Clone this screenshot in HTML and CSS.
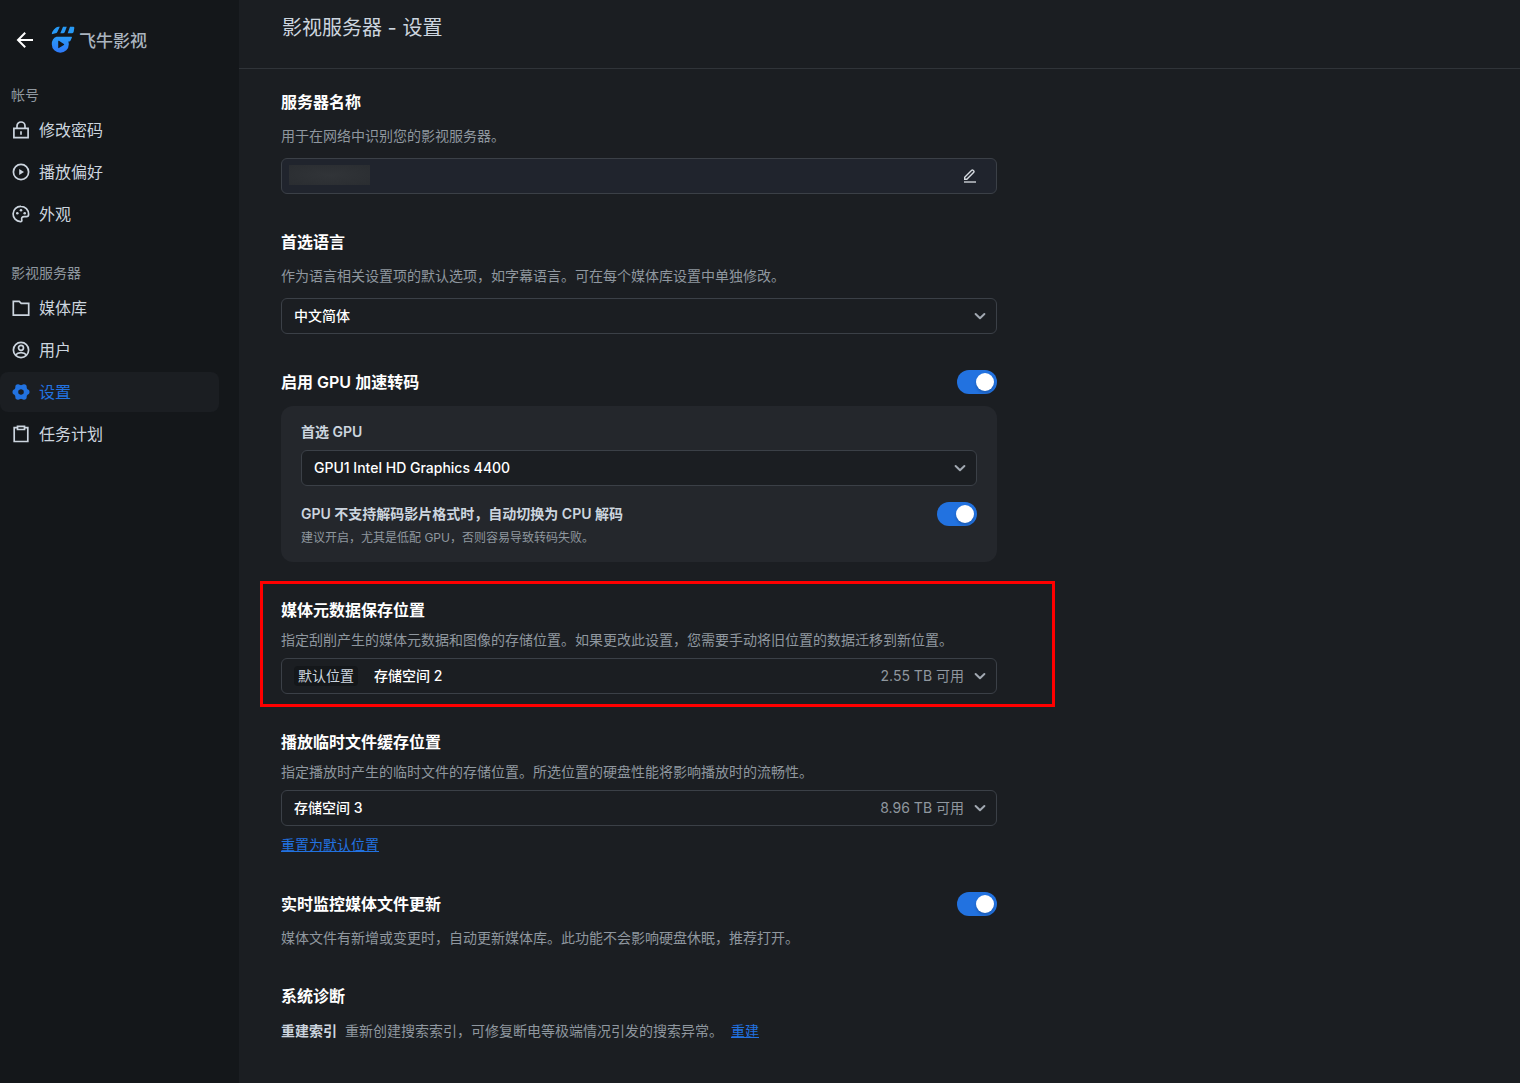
FILE: index.html
```html
<!DOCTYPE html>
<html lang="zh-CN">
<head>
<meta charset="utf-8">
<meta name="viewport" content="width=device-width, initial-scale=1">
<title>影视服务器 - 设置</title>
<link rel="stylesheet" href="styles.css">
</head>
<body>
<svg class="sprite" aria-hidden="true">
  <symbol id="chevron" viewBox="0 0 16 16"><path d="M3.600 6 8 10.200 12.400 6" fill="none" stroke="currentColor" stroke-width="2" stroke-linecap="round" stroke-linejoin="round"/></symbol>
</svg>
<div class="app">
  <aside class="sidebar">
    <header class="brand">
      <button class="back" type="button" aria-label="返回">
        <svg viewBox="0 0 18 18" fill="none" stroke="currentColor" stroke-width="2"><path d="M2 9H17M9.200 1.800 2 9l7.200 7.200"/></svg>
      </button>
      <svg class="logo" viewBox="0 0 24 28" aria-hidden="true">
        <defs><linearGradient id="blue" x1="0" y1="0" x2="0" y2="1"><stop offset="0" stop-color="#2a9bf7"/><stop offset="1" stop-color="#2e78f8"/></linearGradient></defs>
        <path fill="#2799f5" d="M4.800 1.800Q6 .7 7.600 .7h1.200L6.300 6Q5.800 7.200 4.500 7.200L.8 8.200Q.6 5.500 4.800 1.800zM12 .7h3.800l-2 5.300q-.5 1.200-1.800 1.200H9.300zM19 .7h3.300q1.200 0 1 1.200L22.700 5.800q-.3 1.400-1.500 1.400h-4.500z"/>
        <path fill="url(#blue)" fill-rule="evenodd" d="M5.500 10.800h14.900q.8 0 .5.800l-1.300 3q-.4 1-1.500 1h-.8a9 9 0 0 1 .5 2.700A8.500 8.500 0 1 1 .8 18.300Q.8 12.500 5.500 10.800zM7.200 15.200v6.400q0 .8.700.4l5-3.100q.7-.5 0-1l-5-3.100q-.7-.4-.7.400z"/>
      </svg>
      <span class="brand-name">飞牛影视</span>
    </header>
    <nav>
      <section class="nav-group">
        <h2 class="nav-label">帐号</h2>
        <a class="nav-item" href="#password">
          <svg class="nav-icon" viewBox="0 0 18 18"><path d="M1.900 7.300h14.200v9.300H1.900zM5 7V5a4 4 0 0 1 8 0v2M9 10.300v3.400"/></svg>修改密码</a>
        <a class="nav-item" href="#playback">
          <svg class="nav-icon" viewBox="0 0 18 18"><circle cx="9" cy="9" r="7.600"/><path class="solid" d="M7.200 6v6l4.800-3z"/></svg>播放偏好</a>
        <a class="nav-item" href="#appearance">
          <svg class="nav-icon" viewBox="0 0 18 18"><path d="M9 1.400a7.600 7.600 0 0 0-.6 15.200c1.200.1 1.600-.6 1.400-1.500-.6-2.200.3-3.400 2.400-3.400h2.200c1.300 0 2.200-.9 2.200-2.400C16.600 4.800 13.200 1.400 9 1.400z"/><circle class="solid" cx="5.300" cy="8.300" r="1.300"/><circle class="solid" cx="9" cy="5.300" r="1.300"/><circle class="solid" cx="12.700" cy="8.300" r="1.300"/></svg>外观</a>
      </section>
      <section class="nav-group">
        <h2 class="nav-label">影视服务器</h2>
        <a class="nav-item" href="#library">
          <svg class="nav-icon" viewBox="0 0 18 18"><path d="M1.300 2.300h5.900l2 2h7.500v11.800H1.300z"/></svg>媒体库</a>
        <a class="nav-item" href="#users">
          <svg class="nav-icon" viewBox="0 0 18 18"><circle cx="9" cy="9" r="7.600"/><circle cx="9" cy="6.800" r="2.500"/><path d="M3.500 14c1.300-1.500 3.200-2.300 5.500-2.300s4.200.8 5.500 2.300"/></svg>用户</a>
        <a class="nav-item active" href="#settings" aria-current="page">
          <svg class="nav-icon" viewBox="0 0 18 18"><circle cx="9" cy="9" r="4.900" stroke-width="4.200"/><g class="solid"><circle cx="14.800" cy="9" r="2.700"/><circle cx="12" cy="14" r="2.700"/><circle cx="6" cy="14" r="2.700"/><circle cx="3.200" cy="9" r="2.700"/><circle cx="6" cy="4" r="2.700"/><circle cx="12" cy="4" r="2.700"/></g></svg>设置</a>
        <a class="nav-item" href="#tasks">
          <svg class="nav-icon" viewBox="0 0 18 18"><path d="M5.500 2.700H2.200v13.800h13.600V2.700h-3.300M5.500 1.300h7v3.200h-7z"/></svg>任务计划</a>
      </section>
    </nav>
  </aside>

  <main class="main">
    <header class="page-head"><h1>影视服务器 - 设置</h1></header>
    <form class="settings">
      <section class="setting">
        <h2><label for="server-name">服务器名称</label></h2>
        <p class="desc">用于在网络中识别您的影视服务器。</p>
        <div class="field name-field">
          <span class="masked"></span>
          <input id="server-name" type="text" value="">
          <button class="edit" type="button" aria-label="编辑">
            <svg viewBox="0 0 16 16" fill="none" stroke="currentColor"><path d="M2.700 11.300V9.200L9.700 2.200q.7-.6 1.300 0l.8.800q.6.700 0 1.300l-7 7z" stroke-width="1.400"/><path d="M2 14h12" stroke-width="1.800" opacity=".75"/></svg>
          </button>
        </div>
      </section>

      <section class="setting">
        <h2><label for="language">首选语言</label></h2>
        <p class="desc">作为语言相关设置项的默认选项，如字幕语言。可在每个媒体库设置中单独修改。</p>
        <div class="field">
          <select id="language"><option>中文简体</option></select>
          <svg class="chevron"><use href="#chevron"/></svg>
        </div>
      </section>

      <section class="setting">
        <div class="row">
          <h2><label for="gpu-on">启用 GPU 加速转码</label></h2>
          <input class="switch" id="gpu-on" type="checkbox" role="switch" checked>
        </div>
        <div class="card">
          <label class="card-label" for="gpu">首选 GPU</label>
          <div class="field">
            <select id="gpu"><option>GPU1 Intel HD Graphics 4400</option></select>
            <svg class="chevron"><use href="#chevron"/></svg>
          </div>
          <div class="row fallback">
            <label class="card-label" for="cpu-fallback">GPU 不支持解码影片格式时，自动切换为 CPU 解码</label>
            <input class="switch" id="cpu-fallback" type="checkbox" role="switch" checked>
          </div>
          <p class="hint">建议开启，尤其是低配 GPU，否则容易导致转码失败。</p>
        </div>
      </section>

      <section class="setting compact marked">
        <h2><label for="meta-path">媒体元数据保存位置</label></h2>
        <p class="desc">指定刮削产生的媒体元数据和图像的存储位置。如果更改此设置，您需要手动将旧位置的数据迁移到新位置。</p>
        <div class="field">
          <span class="tag">默认位置</span>
          <select id="meta-path"><option>存储空间 2</option></select>
          <span class="free">2.55 TB 可用</span>
          <svg class="chevron"><use href="#chevron"/></svg>
        </div>
      </section>

      <section class="setting compact">
        <h2><label for="cache-path">播放临时文件缓存位置</label></h2>
        <p class="desc">指定播放时产生的临时文件的存储位置。所选位置的硬盘性能将影响播放时的流畅性。</p>
        <div class="field">
          <select id="cache-path"><option>存储空间 3</option></select>
          <span class="free">8.96 TB 可用</span>
          <svg class="chevron"><use href="#chevron"/></svg>
        </div>
        <p class="action"><a href="#reset">重置为默认位置</a></p>
      </section>

      <section class="setting">
        <div class="row">
          <h2><label for="watch">实时监控媒体文件更新</label></h2>
          <input class="switch" id="watch" type="checkbox" role="switch" checked>
        </div>
        <p class="desc">媒体文件有新增或变更时，自动更新媒体库。此功能不会影响硬盘休眠，推荐打开。</p>
      </section>

      <section class="setting">
        <h2>系统诊断</h2>
        <p class="action diagnose"><strong>重建索引</strong><span>重新创建搜索索引，可修复断电等极端情况引发的搜索异常。</span><a href="#rebuild">重建</a></p>
      </section>
    </form>
  </main>
</div>
</body>
</html>
```
FILE: styles.css
```css
:root {
  --bg: #1b1e22;
  --side: #14171a;
  --card: #24272c;
  --line: #3b4047;
  --text: #ccd5df;
  --muted: #8f979f;
  --blue: #2272e0;
}

* { box-sizing: border-box; }

body {
  margin: 0;
  background: var(--bg);
  color: var(--text);
  font: 14px/20px Inter, "Noto Sans CJK SC", sans-serif;
}

h1, h2, p { margin: 0; }

button, input, select {
  margin: 0;
  padding: 0;
  border: 0;
  background: none;
  color: inherit;
  font: inherit;
}

a { color: var(--blue); }

.sprite { display: none; }

.app { display: flex; min-height: 100vh; }

/* Sidebar */
.sidebar {
  flex: 0 0 239px;
  padding-right: 20px;
  background: var(--side);
}

.brand {
  display: flex;
  align-items: center;
  height: 80px;
  padding-left: 16px;
}

.back { width: 18px; height: 18px; color: #fff; }
.back svg { display: block; width: 18px; height: 18px; }

.logo { width: 24px; height: 28px; margin: 0 4px 0 17px; }

.brand-name {
  padding-top: 2px;
  color: #aab4bf;
  font-size: 17px;
  font-style: oblique 8deg;
  font-weight: 500;
}

.nav-group { display: grid; gap: 2px; }
.nav-group + .nav-group { margin-top: 24px; }

.nav-label {
  height: 28px;
  padding-left: 11px;
  color: var(--muted);
  font-size: 14px;
  font-weight: 400;
  line-height: 30px;
}

.nav-item {
  display: flex;
  align-items: center;
  gap: 9px;
  height: 40px;
  padding-left: 12px;
  border-radius: 8px;
  color: var(--text);
  font-size: 16px;
  text-decoration: none;
}

.nav-item.active { background: var(--bg); color: var(--blue); }

.nav-icon {
  width: 18px;
  height: 18px;
  fill: none;
  stroke: currentColor;
  stroke-width: 1.7;
}

.nav-icon .solid { fill: currentColor; stroke: none; }

/* Page */
.main { flex: 1; min-width: 0; }

.page-head {
  height: 69px;
  padding: 14px 43px;
  border-bottom: 1px solid #303439;
}

.page-head h1 { font-size: 20px; font-weight: 400; line-height: 28px; }

.settings {
  display: grid;
  gap: 36px;
  max-width: 800px;
  padding: 21px 42px 40px;
}

.setting { display: grid; gap: 12px; }
.setting.compact { gap: 8px; }

.setting h2 {
  color: #fff;
  font-size: 16px;
  font-weight: 600;
  line-height: 24px;
}

.desc { color: var(--muted); }

.row { display: flex; align-items: center; justify-content: space-between; }

.field {
  display: flex;
  align-items: center;
  height: 36px;
  padding: 0 8px 0 12px;
  border: 1px solid var(--line);
  border-radius: 6px;
  background: var(--bg);
}

.field select, .field input {
  flex: 1;
  min-width: 0;
  height: 34px;
  color: #fff;
  font-weight: 500;
  appearance: none;
}

.name-field { padding: 0 18px 0 7px; background: #20242d; }

.masked {
  width: 81px;
  height: 20px;
  margin-bottom: 2px;
  background: radial-gradient(#313438, #2a2d31);
}

.edit { width: 16px; height: 16px; color: #d5dae0; }
.edit svg { display: block; width: 16px; height: 16px; }

.chevron { width: 16px; height: 16px; margin-left: 8px; color: #a2a9b2; }

.tag {
  margin-right: 16px;
  padding: 0 4px;
  border-radius: 4px;
  background: var(--side);
}

.free { color: var(--muted); }

.card {
  padding: 16px 20px;
  border-radius: 12px;
  background: var(--card);
}

.card-label { display: block; font-weight: 600; }
.card .field { margin-top: 8px; }
.fallback { margin: 16px 0 4px; }

.hint { color: var(--muted); font-size: 12px; line-height: 16px; }

.switch {
  display: grid;
  flex: none;
  align-items: center;
  justify-content: end;
  width: 40px;
  height: 24px;
  padding: 3px;
  border-radius: 12px;
  background: var(--blue);
  appearance: none;
}

.switch::before {
  content: "";
  width: 18px;
  height: 18px;
  border-radius: 50%;
  background: #fff;
  box-shadow: 0 2px 3px #0003;
}

.action { line-height: 22px; }
.diagnose { display: flex; color: var(--muted); }
.diagnose strong { margin-right: 8px; color: var(--text); font-weight: 600; }
.diagnose a { margin-left: 8px; }

/* Callout frame over the metadata setting */
.marked { position: relative; }

.marked::after {
  content: "";
  position: absolute;
  inset: -17px -58px -13px -21px;
  border: 3px solid #f00;
  pointer-events: none;
}
```
